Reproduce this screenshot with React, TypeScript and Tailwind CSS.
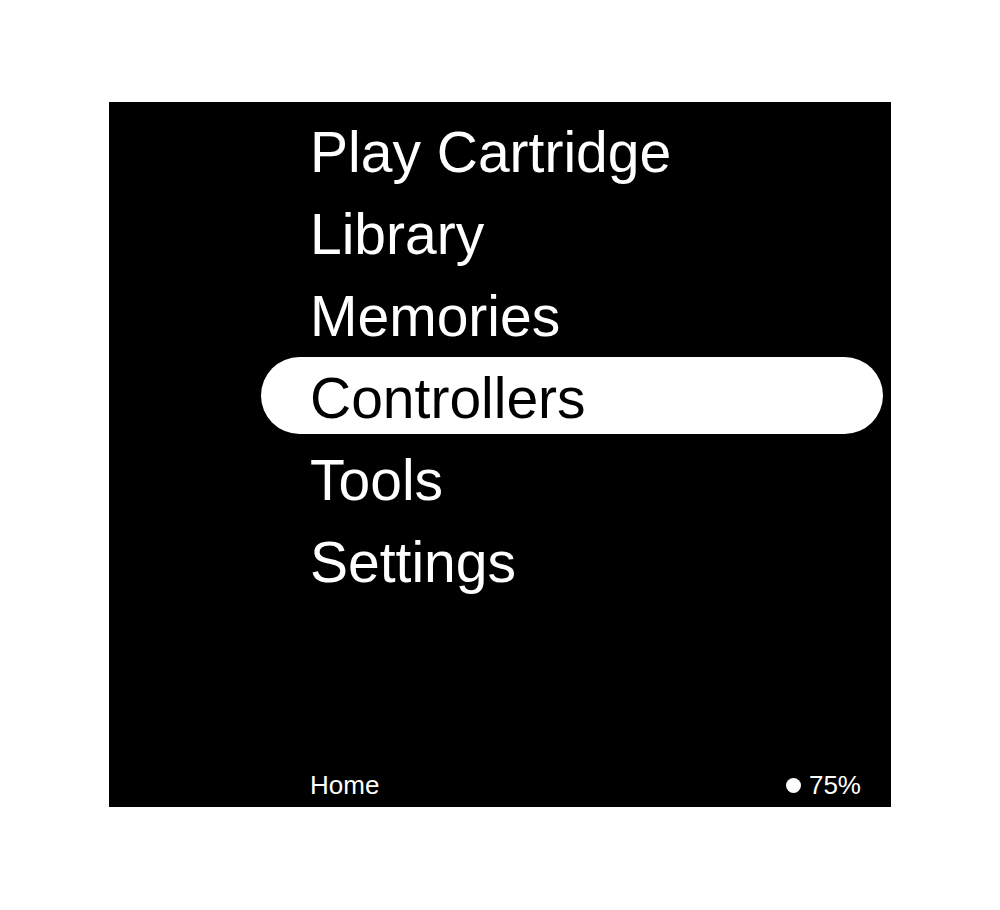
const items = ['Play Cartridge', 'Library', 'Memories', 'Controllers', 'Tools', 'Settings']
const selected = 3

export default function App() {
  return (
    <div className="h-[910px] w-[1000px] bg-white pt-[102px] pl-[109px]" style={{ fontFamily: '"Liberation Sans", Arial, sans-serif' }}>
      <div className="flex h-[705px] w-[782px] flex-col bg-black">
        <ul className="mt-[9px] ml-[152px] mr-[8px] flex flex-col gap-[5px]">
          {items.map((item, i) => (
            <li
              key={item}
              className={`h-[77px] rounded-full pl-[49px] pt-[6px] text-[57px] leading-[71px] ${
                i === selected ? 'bg-white text-black' : 'text-white'
              }`}
            >
              {item}
            </li>
          ))}
        </ul>

        <div className="flex-1" />

        <footer className="flex items-center justify-between pb-[9px] pl-[201px] pr-[30px] text-[26px] leading-[26px] text-white">
          <span>Home</span>
          <span className="flex items-center gap-[8px]">
            <span className="h-[15px] w-[15px] rounded-full bg-white" />
            75%
          </span>
        </footer>
      </div>
    </div>
  )
}
